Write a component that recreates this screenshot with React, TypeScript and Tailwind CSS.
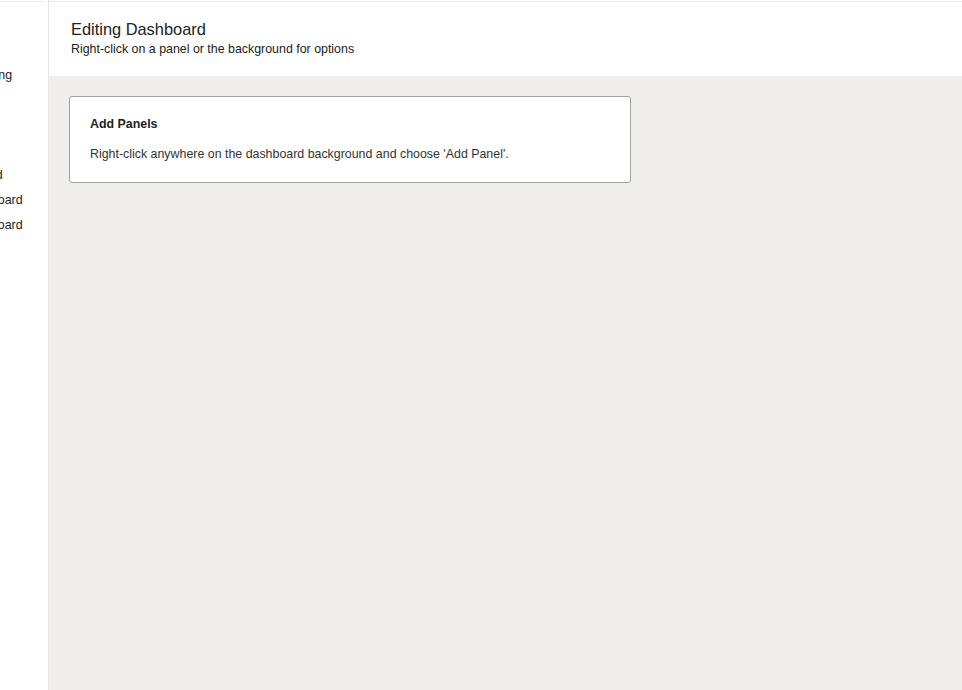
import React from "react";

const navItems = [
  "Load Testing",
  "Home",
  "Reports",
  "Settings",
  "Dashboard",
  "My Dashboard",
  "My Dashboard",
];

function Sidebar() {
  return (
    <aside className="w-[49px] shrink-0 overflow-hidden border-r border-[#e6e6e6] bg-white">
      <div className="mt-px mr-[3px] h-px bg-[#e6e6e6]" />
      {/* panel is slid out to the left, only the tail of each label shows */}
      <ul className="-ml-[58px] pt-[61px] whitespace-nowrap text-[12.4px] text-[#222]">
        {navItems.map((item, i) => (
          <li key={i} className="h-[25px] leading-[25px]">
            {item}
          </li>
        ))}
      </ul>
    </aside>
  );
}

export default function App() {
  return (
    <div
      className="flex h-[690px] w-full overflow-hidden bg-white"
      style={{ fontFamily: '"Liberation Sans", Arial, sans-serif' }}
    >
      <Sidebar />
      <main className="flex min-w-0 flex-1 flex-col">
        <div className="mt-px h-px bg-[#e6e6e6]" />
        <header className="h-[74px] shrink-0 bg-white px-[22px] pt-[17px]">
          <h1 className="text-[16.4px] leading-[20px] text-[#222]">Editing Dashboard</h1>
          <p className="mt-[3px] text-[12.4px] leading-[15px] text-[#222]">
            Right-click on a panel or the background for options
          </p>
        </header>
        <section className="flex-1 bg-[#efeeec] p-5">
          <div className="h-[87px] w-[562px] rounded-[3px] border border-[#a3a3a3] bg-white px-5 pt-[20px]">
            <h2 className="text-[12.4px] font-bold leading-[15px] text-[#222]">Add Panels</h2>
            <p className="mt-[15px] text-[12.4px] leading-[15px] text-[#333]">
              Right-click anywhere on the dashboard background and choose 'Add Panel'.
            </p>
          </div>
        </section>
      </main>
    </div>
  );
}
